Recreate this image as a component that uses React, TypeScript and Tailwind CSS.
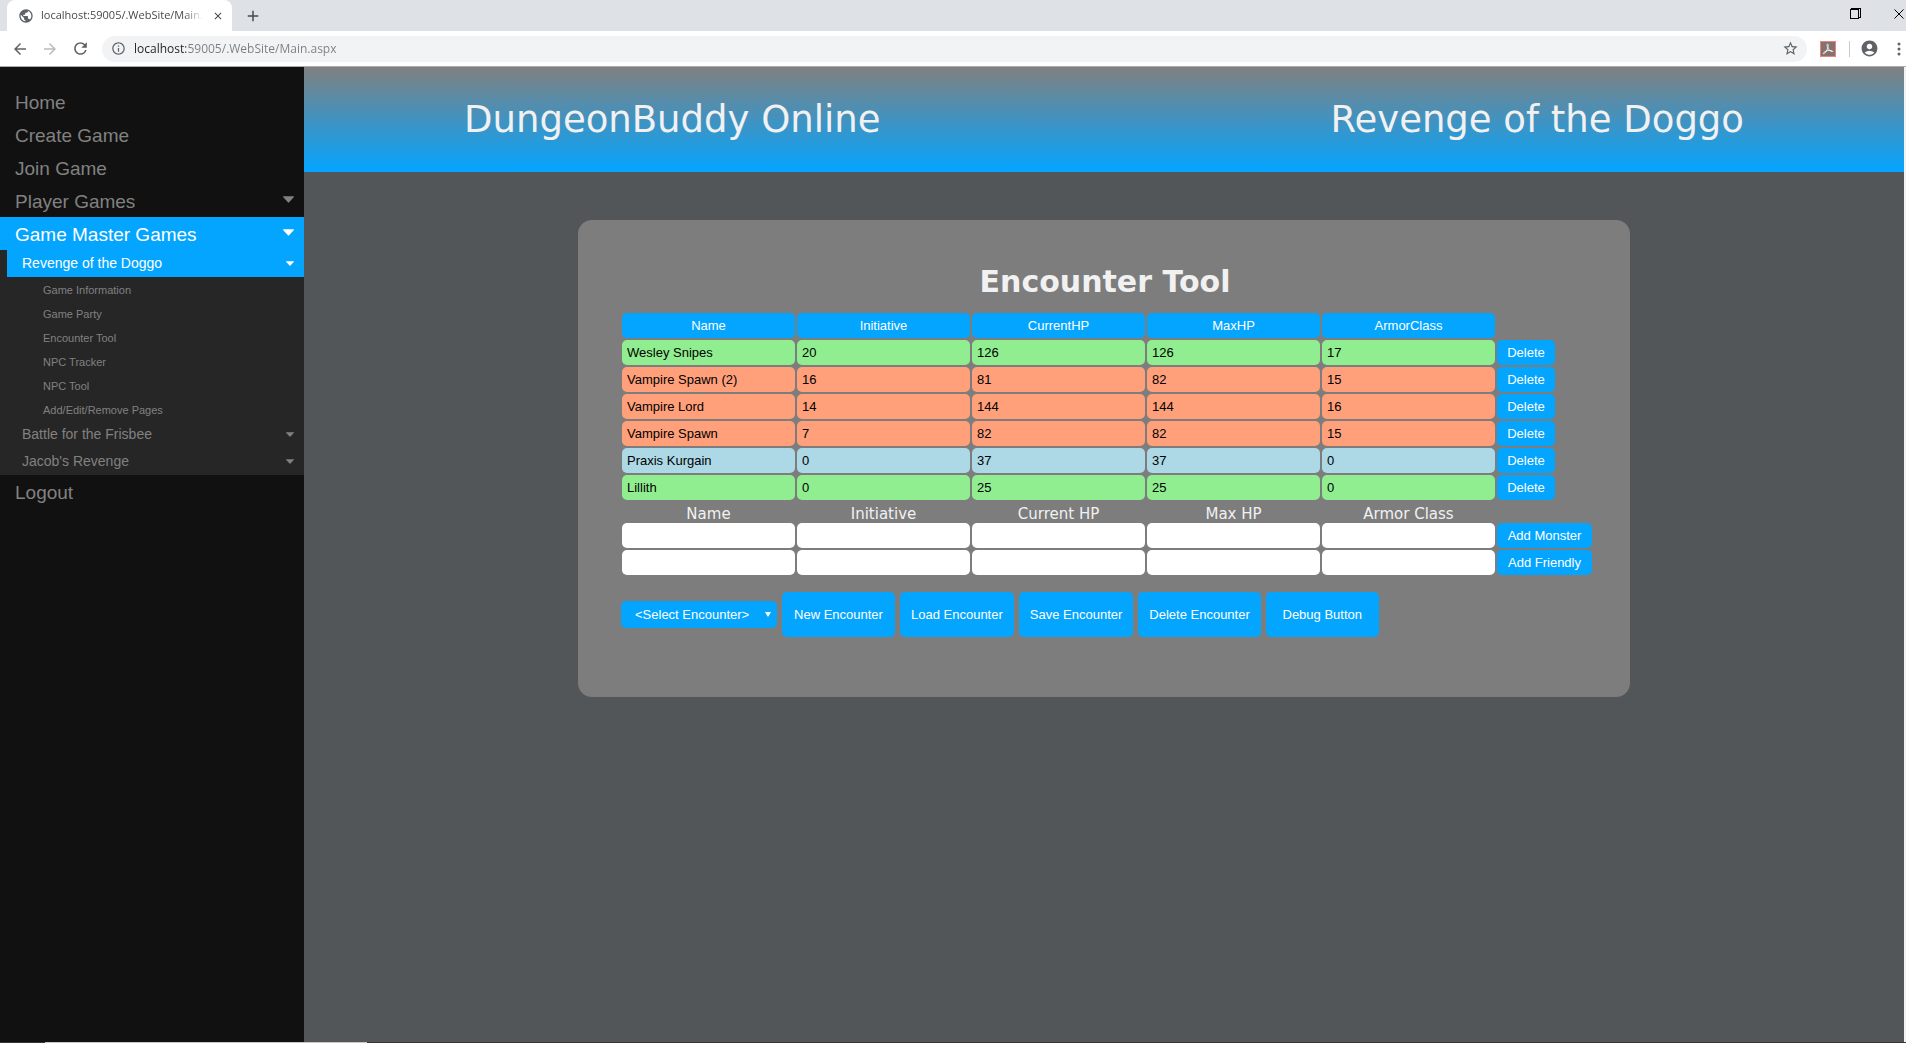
import React from "react";
import { MdPublic, MdStarBorder, MdAccountCircle, MdArrowBack, MdArrowForward, MdRefresh, MdInfoOutline, MdAdd, MdClose } from "react-icons/md";

const heroes = "bg-[#90ee90]";
const monsters = "bg-[#ffa07a]";
const friends = "bg-[#add8e6]";

const fighters = [
  { color: heroes, values: ["Wesley Snipes", "20", "126", "126", "17"] },
  { color: monsters, values: ["Vampire Spawn (2)", "16", "81", "82", "15"] },
  { color: monsters, values: ["Vampire Lord", "14", "144", "144", "16"] },
  { color: monsters, values: ["Vampire Spawn", "7", "82", "82", "15"] },
  { color: friends, values: ["Praxis Kurgain", "0", "37", "37", "0"] },
  { color: heroes, values: ["Lillith", "0", "25", "25", "0"] },
];

const columns = ["Name", "Initiative", "CurrentHP", "MaxHP", "ArmorClass"];
const fields = ["Name", "Initiative", "Current HP", "Max HP", "Armor Class"];
const pages = ["Game Information", "Game Party", "Encounter Tool", "NPC Tracker", "NPC Tool", "Add/Edit/Remove Pages"];
const actions = ["New Encounter", "Load Encounter", "Save Encounter", "Delete Encounter", "Debug Button"];

function Caret({ small = false }: { small?: boolean }) {
  return (
    <svg viewBox="0 0 12 7" className={small ? "h-[5px] w-2" : "mb-1 h-[7px] w-[11px]"} fill="currentColor" aria-hidden="true">
      <path d="M0.5 0h11a.5.5 0 0 1 .4.8L6.7 6.6a1 1 0 0 1-1.4 0L.1.8A.5.5 0 0 1 .5 0z" />
    </svg>
  );
}

function TopLink({ label, caret, active }: { label: string; caret?: boolean; active?: boolean }) {
  return (
    <a
      href="#"
      className={
        "flex h-[33px] items-center justify-between pl-[15px] pr-[10px] pt-[2px] text-[19px] leading-[31px] " +
        (active ? "bg-[#03a5ff] text-white" : "text-[#818181]")
      }
    >
      {label}
      {caret && <Caret />}
    </a>
  );
}

function GameLink({ label, active }: { label: string; active?: boolean }) {
  return (
    <a
      href="#"
      className={
        "ml-[7px] flex h-[27px] items-center justify-between pl-[15px] pr-[10px] text-[14px] " +
        (active ? "bg-[#03a5ff] text-white" : "text-[#818181]")
      }
    >
      {label}
      <Caret small />
    </a>
  );
}

function Browser() {
  return (
    <div className="font-['Open_Sans',sans-serif]">
      <div className="flex h-[31px] items-end bg-[#dee1e6]">
        <div className="ml-[7px] flex h-[31px] w-[225px] items-center rounded-t-lg bg-white pl-[11px] pr-2">
          <MdPublic className="size-4 shrink-0 text-[#5f6368]" />
          <span className="ml-[7px] w-[163px] overflow-hidden whitespace-nowrap text-[11px] text-[#45494d] [mask-image:linear-gradient(to_right,black_88%,transparent)]">
            localhost:59005/.WebSite/Main.aspx
          </span>
          <button aria-label="Close tab" className="ml-[9px] text-[#45494d]">
            <MdClose className="size-3" />
          </button>
        </div>
        <button aria-label="New tab" className="ml-3 flex h-[31px] items-center text-[#45494d]">
          <MdAdd className="size-[18px]" />
        </button>
        <div className="ml-auto flex h-[31px] items-center gap-[33px] pb-1 pr-[2px] text-black">
          <button aria-label="Restore">
            <svg viewBox="0 0 11 11" className="size-[11px]" fill="none" stroke="currentColor" shapeRendering="crispEdges">
              <path d="M.5 1.500h8v9h-8zM1.500 1.500v-1h9v9h-2" />
            </svg>
          </button>
          <button aria-label="Close window">
            <svg viewBox="0 0 10 10" className="size-[10px]" fill="none" stroke="currentColor">
              <path d="M.5.5l9 9M9.500.5l-9 9" />
            </svg>
          </button>
        </div>
      </div>
      <div className="flex h-9 items-center border-b border-[#a9abad] bg-white pl-[11px] text-[#5f6368]">
        <button aria-label="Back"><MdArrowBack className="size-[18px]" /></button>
        <button aria-label="Forward" className="ml-3 text-[#babcbe]"><MdArrowForward className="size-[18px]" /></button>
        <button aria-label="Reload" className="ml-3"><MdRefresh className="size-[19px]" /></button>
        <div className="ml-3 flex h-[26px] flex-1 items-center rounded-full bg-[#f1f3f4] pl-[9px] pr-2">
          <MdInfoOutline className="size-[15px]" />
          <input
            aria-label="Address"
            className="ml-2 min-w-0 flex-1 bg-linear-to-r from-[#202124] from-[52px] to-[#7a7e82] to-[52px] bg-clip-text text-[12px] text-transparent"
            defaultValue="localhost:59005/.WebSite/Main.aspx"
          />
          <button aria-label="Bookmark"><MdStarBorder className="size-[17px]" /></button>
        </div>
        <button aria-label="Acrobat" className="ml-[13px] flex size-4 items-center justify-center border border-[#e9847a] bg-[#85716f]">
          <svg viewBox="0 0 12 12" className="size-3" fill="none" stroke="#eee" strokeWidth="1">
            <path d="M5.500 1c1 0 1 2 .3 4C5 7.500 3 10.500 1.500 10.800 .8 10 3 8 6 7.500c2.500-.4 5 .3 4.800 1C10 9.300 7 7.500 5.800 5 5 3 4.800 1 5.500 1z" />
          </svg>
        </button>
        <div className="ml-[13px] mr-[10px] h-4 w-px bg-[#c9cbce]" />
        <button aria-label="Profile"><MdAccountCircle className="size-[19px]" /></button>
        <button aria-label="Menu" className="ml-[18px] mr-[5px]">
          <svg viewBox="0 0 4 14" className="h-[14px] w-1" fill="currentColor">
            <circle cx="2" cy="2" r="1.500" />
            <circle cx="2" cy="7" r="1.500" />
            <circle cx="2" cy="12" r="1.500" />
          </svg>
        </button>
      </div>
    </div>
  );
}

export default function App() {
  return (
    <div className="flex min-h-screen flex-col bg-[#f1f1f1] font-['Liberation_Sans',sans-serif]">
      <Browser />
      <div className="mr-[2px] flex flex-1">
        <nav className="w-[304px] shrink-0 bg-[#111111] pt-[18px]">
          <TopLink label="Home" />
          <TopLink label="Create Game" />
          <TopLink label="Join Game" />
          <TopLink label="Player Games" caret />
          <TopLink label="Game Master Games" caret active />
          <div className="bg-[#262626]">
            <GameLink label="Revenge of the Doggo" active />
            <div>
              {pages.map((p) => (
                <a key={p} href="#" className="block h-6 pl-[43px] pt-px text-[11px] leading-6 text-[#818181]">
                  {p}
                </a>
              ))}
            </div>
            <GameLink label="Battle for the Frisbee" />
            <GameLink label="Jacob's Revenge" />
          </div>
          <TopLink label="Logout" />
        </nav>
        <div className="min-w-0 flex-1 bg-[#525659]">
          <header className="flex h-[105px] items-center justify-between bg-linear-to-b/srgb from-[#808080] to-[#03a5ff] px-[10%] font-['DejaVu_Sans',sans-serif] text-[37px] text-[#f1f1f1]">
            <span>DungeonBuddy Online</span>
            <span>Revenge of the Doggo</span>
          </header>
          <main className="mx-auto mt-12 w-fit rounded-[14px] bg-[#7d7d7d] pb-[60px] pl-[42px] pr-9 pt-10">
            <h1 className="pr-1 text-center font-['DejaVu_Sans',sans-serif] text-[30px] font-bold leading-[44px] text-[#f1f1f1]">
              Encounter Tool
            </h1>
            <table className="mt-[9px] border-separate border-spacing-x-[2px] border-spacing-y-0 text-[14px]">
              <thead>
                <tr>
                  {columns.map((c) => (
                    <th key={c} className="p-0 pb-[2px] font-normal">
                      <button className="block h-[25px] w-[173px] rounded-[5px] bg-[#03a5ff] text-[13px] text-white">{c}</button>
                    </th>
                  ))}
                </tr>
              </thead>
              <tbody>
                {fighters.map((f) => (
                  <tr key={f.values[0]}>
                    {f.values.map((v, i) => (
                      <td key={i} className="p-0 pb-[2px]">
                        <input
                          aria-label={columns[i]}
                          defaultValue={v}
                          className={"block h-[25px] w-[173px] rounded-[5px] px-[5px] text-[13px] text-black " + f.color}
                        />
                      </td>
                    ))}
                    <td className="p-0 pb-[2px]">
                      <button className="block h-[25px] w-[58px] rounded-[5px] bg-[#03a5ff] text-[13px] text-white">Delete</button>
                    </td>
                  </tr>
                ))}
                <tr>
                  {fields.map((c) => (
                    <th key={c} className="h-[21px] p-0 pt-1 font-['DejaVu_Sans',sans-serif] text-[15px] font-normal leading-[17px] text-[#f1f1f1]">
                      {c}
                    </th>
                  ))}
                </tr>
                {["Add Monster", "Add Friendly"].map((label) => (
                  <tr key={label}>
                    {fields.map((c) => (
                      <td key={c} className="p-0 pb-[2px]">
                        <input aria-label={c} className="block h-[25px] w-[173px] rounded-[5px] bg-white px-[5px] text-[13px]" />
                      </td>
                    ))}
                    <td className="p-0 pb-[2px]">
                      <button className="block h-[25px] w-[95px] rounded-[5px] bg-[#03a5ff] text-[13px] text-white">{label}</button>
                    </td>
                  </tr>
                ))}
              </tbody>
            </table>
            <div className="mt-[15px] flex items-center gap-[5px] text-[13px] text-white">
              <div className="relative flex items-center">
                <select aria-label="Encounter" className="ml-px h-[27px] w-[156px] appearance-none rounded-[5px] bg-[#03a5ff] pl-[14px] text-[13px]">
                  <option>&lt;Select Encounter&gt;</option>
                </select>
                <svg viewBox="0 0 6 5" className="pointer-events-none absolute right-[6px] h-[5px] w-[6px]" fill="white">
                  <path d="M0 0h6L3 5z" />
                </svg>
              </div>
              {actions.map((a) => (
                <button key={a} className="h-[45px] min-w-[113px] rounded-[5px] bg-[#03a5ff] px-[11px]">
                  {a}
                </button>
              ))}
            </div>
          </main>
        </div>
      </div>
      <div className="flex h-px bg-[#3a3535]">
        <div className="ml-[45px] w-[322px] bg-[#c8c8c8]" />
      </div>
    </div>
  );
}
